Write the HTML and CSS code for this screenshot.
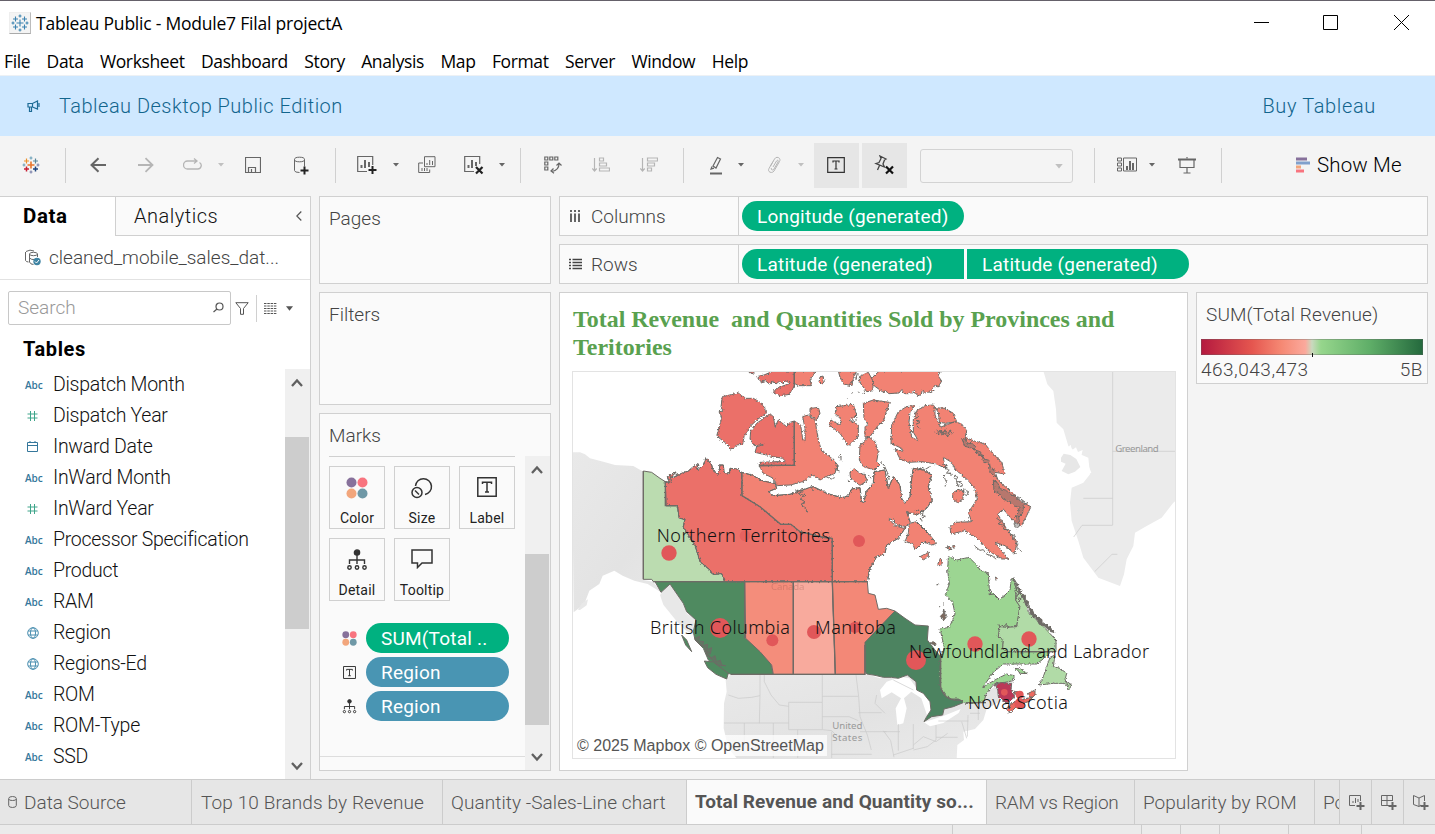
FILE: index.html
```html
<!DOCTYPE html>
<html lang="en">
<head>
<meta charset="utf-8">
<title>Tableau Public - Module7 Filal projectA</title>
<link rel="stylesheet" href="styles.css">
</head>
<body>
<svg class="defs" width="0" height="0">
  <symbol id="caret" viewBox="0 0 6 4"><path d="M0 0h6L3 3.5z"/></symbol>
  <symbol id="dots" viewBox="0 0 22 22"><circle cx="5.5" cy="5.5" r="5" fill="#87719b"/><circle cx="16.5" cy="5.5" r="5" fill="#f8747f"/><circle cx="5.5" cy="16.5" r="5" fill="#f2a67c"/><circle cx="16.5" cy="16.5" r="5" fill="#6f98a6"/></symbol>
  <symbol id="label" viewBox="0 0 20 20"><path d="M.8.8h18.4v18.4H.8zM5.5 7V5.2h9V7M10 5.2v10M8 15h4" fill="none" stroke="#333" stroke-width="1.5"/></symbol>
  <symbol id="detail" viewBox="0 0 20 22"><g fill="none" stroke="#333" stroke-width="1.4"><circle cx="10" cy="3.5" r="2.6" fill="#333"/><path d="M10 6v9M2.500 15v-4h15v4"/><circle cx="2.500" cy="18.500" r="1.700"/><circle cx="10" cy="18.500" r="1.700"/><circle cx="17.500" cy="18.500" r="1.700"/></g></symbol>
  <symbol id="globe" viewBox="0 0 12 12"><g fill="none" stroke="#4a8fb0"><circle cx="6" cy="6" r="5.300"/><ellipse cx="6" cy="6" rx="2.500" ry="5.300"/><path d="M1.200 4h9.600M1.200 8h9.600"/></g></symbol>
  <symbol id="up" viewBox="0 0 12 10"><path d="M1 8l5-5.500L11 8" fill="none" stroke="#606060" stroke-width="2.300"/></symbol>
  <symbol id="down" viewBox="0 0 12 10"><path d="M1 2l5 5.500L11 2" fill="none" stroke="#606060" stroke-width="2.300"/></symbol>
</svg>
<div class="app">
  <header class="title">
    <span class="appicon"><svg class="logo" width="18" height="18" viewBox="0 0 18 18"><path d="M9 5.500v7M5.500 9h7M4.500 2.500v5M2 5h5M13.500 2.500v5M11 5h5M4.500 10.500v5M2 13h5M13.500 10.500v5M11 13h5M9 .5v3M7.500 2h3M2 7.500v3M.5 9h3M9 14.500v3M7.500 16h3M16 7.500v3M14.500 9h3"/></svg></span>
    <span class="title-text">Tableau Public - Module7 Filal projectA</span>
    <svg class="winctl" width="155" height="20" viewBox="0 0 155 20" fill="none" stroke="#000"><path d="M0 9.500h15M69.500 2.500h14v14h-14zM140 2l15 15M155 2l-15 15"/></svg>
  </header>
  <nav class="menu"><span>File</span><span>Data</span><span>Worksheet</span><span>Dashboard</span><span>Story</span><span>Analysis</span><span>Map</span><span>Format</span><span>Server</span><span>Window</span><span>Help</span></nav>
  <div class="banner">
    <svg width="14" height="14" viewBox="0 0 14 14" fill="none" stroke="#1d6b96" stroke-width="1.200"><path d="M1 4.500h4.500L10.500 2v8L5.500 8H1zM5.500 4.500V8M2.500 8v4.500h2V8M12 4v4"/></svg>
    <span>Tableau Desktop Public Edition</span><span class="buy">Buy Tableau</span>
  </div>
  <div class="toolbar">
    <svg width="18" height="18" viewBox="0 0 18 18" stroke-width="1.200"><path d="M9 5.500v7M5.500 9h7" stroke="#e8762d" stroke-width="1.600"/><path d="M4.500 2.500v5M2 5h5" stroke="#eb912c"/><path d="M13.500 2.500v5M11 5h5" stroke="#59879b"/><path d="M4.500 10.500v5M2 13h5" stroke="#c72035" stroke-width="1.500"/><path d="M13.500 10.500v5M11 13h5" stroke="#1f447e" stroke-width="1.500"/><path d="M9 .5v3M7.500 2h3M2 7.500v3M.5 9h3" stroke="#6fa3bb"/><path d="M9 14.500v3M7.500 16h3M16 7.500v3M14.500 9h3" stroke="#7c82ab"/></svg><i class="sep"></i>
    <svg width="17" height="16" viewBox="0 0 17 16" stroke-width="2"><path d="M16 8H2M8.500 1.200L1.500 8l7 6.800"/></svg>
    <svg class="dim" width="17" height="16" viewBox="0 0 17 16" stroke-width="1.800"><path d="M0 8h14M7.500 1.200L14.500 8l-7 6.800"/></svg>
    <svg class="dim" width="19" height="14" viewBox="0 0 19 14"><path d="M13 3H4.500a3.800 3.800 0 000 8h10a3.500 3.500 0 002-6.500M11 .5L14 3l-3 2.500" stroke-width="1.300"/></svg>
    <svg class="caret dim" width="6" height="4"><use href="#caret"/></svg>
    <svg width="16" height="16" viewBox="0 0 16 16"><path d="M.5.5h15v15H.5zM3.500 15.500v-5h7v5M6.500 12v3" stroke-width="1.200"/></svg>
    <svg width="17" height="19" viewBox="0 0 17 19"><path d="M1.500 3.500v11q0 2 5 2M11.500 3.500v7M1.500 3.500a5 2.300 0 0110 0a5 2.300 0 01-10 0"/><path d="M11.500 10.500v8M7.500 14.500h8" stroke="#222" stroke-width="2"/></svg><i class="sep"></i>
    <svg width="20" height="20" viewBox="0 0 20 20"><path d="M10 16.500H.7V1.500h15V10" stroke-width="1.200"/><path d="M4.500 10v3M8 5v8M12 7v5" stroke-width="2"/><path d="M15.500 11v8M11.500 15h8" stroke="#222" stroke-width="2"/></svg>
    <svg class="caret" width="6" height="4"><use href="#caret"/></svg>
    <svg width="18" height="18" viewBox="0 0 18 18"><path d="M6.500.7h10.500v10H6.500zM5 7H.7v9.500h11v-3M9 7v2M11.700 4v5M14.500 5v4M4 12v3M6.500 12v3M9 12v3"/></svg>
    <svg width="20" height="20" viewBox="0 0 20 20"><path d="M10 16.500H.7V1.500h15V9" stroke-width="1.200"/><path d="M4.500 10v3M8 5v8M12 7v4" stroke-width="2"/><path d="M12 12l6.500 6.500M18.500 12L12 18.500" stroke="#222" stroke-width="2.200"/></svg>
    <svg class="caret" width="6" height="4"><use href="#caret"/></svg><i class="sep"></i>
    <svg width="18" height="18" viewBox="0 0 18 18"><path d="M.8 1h3v3h-3zM5.800 1h3v3h-3zM10.800 1h3v3h-3zM.8 6h3v3h-3zM.8 11h3v3h-3zM15 8q0 6-7 7.500M12.500 9.500L15 7l2.500 2.500M9.500 12.500L7 15l3 2.200" stroke-width="1.200"/></svg>
    <svg class="dim" width="18" height="16" viewBox="0 0 18 16"><path d="M2.500 1v13M.3 11.500L2.500 14l2.200-2.500M7.500 1h4v3h-4zM7.500 6h7v3h-7zM7.500 11h10v3h-10z" stroke-width="1.200"/></svg>
    <svg class="dim" width="18" height="16" viewBox="0 0 18 16"><path d="M2.500 1v13M.3 11.500L2.500 14l2.200-2.500M7.500 1h10v3h-10zM7.500 6h7v3h-7zM7.500 11h4v3h-4z" stroke-width="1.200"/></svg><i class="sep"></i>
    <svg width="14" height="20" viewBox="0 0 14 20"><path d="M8.500 2.500l3 1.500-4.500 9-3-2zM3 11.500L2 14l3-.8" stroke-width="1.200"/><path d="M1 18.500h12" stroke-width="2"/></svg>
    <svg class="caret" width="6" height="4"><use href="#caret"/></svg>
    <svg class="dim" width="14" height="18" viewBox="0 0 14 18"><path d="M3.500 10L7.500 3c2-3.500 7-1 5 2.500L7 15c-2 3-7 1-5-2.500l4-7M6 11l3.500-6c1-1.500 2.500-.5 1.500 1L7 13c-1.500 2-3.500.5-2.500-1"/></svg>
    <svg class="caret dim" width="6" height="4"><use href="#caret"/></svg>
    <span class="toggle"><svg width="18" height="16" viewBox="0 0 18 16"><path d="M.7.7h16.600v14.600H.7zM6 5.500V4h6v1.500M9 4v8M7.500 12h3" stroke="#333" stroke-width="1.200"/></svg></span>
    <span class="toggle"><svg width="20" height="20" viewBox="0 0 20 20"><path d="M6 1l6 3-1.500 1-1.500 4 1.500 3L2 8.500l3-1 2-4zM5.500 10.500L3.500 15" stroke="#444" stroke-width="1.300"/><path d="M12 11.500l7 7M19 11.500l-7 7" stroke="#111" stroke-width="2.200"/></svg></span>
    <span class="select"><svg class="caret dim" width="8" height="5" viewBox="0 0 6 4"><path d="M0 0h6L3 3.500z"/></svg></span><i class="sep"></i>
    <svg width="20" height="16" viewBox="0 0 20 16"><path d="M.5 1h4v3h-4zM.5 6h4v3h-4zM.5 11h4v3h-4zM6.500 1h13v13h-13z"/><path d="M10 9v4M13 4v9M16 6v7" stroke-width="2"/></svg>
    <svg class="caret" width="6" height="4"><use href="#caret"/></svg>
    <svg width="18" height="17" viewBox="0 0 18 17"><path d="M0 2.500h18" stroke-width="2"/><path d="M2 2v8.500h14V2M9 0v1.500M9 10.500V16M5.500 16h7" stroke-width="1.200"/></svg><i class="sep"></i>
    <span class="showme"><svg width="15" height="16" viewBox="0 0 15 16"><path d="M0 2h11" stroke="#87719b" stroke-width="3"/><path d="M0 6h14" stroke="#80a0cc" stroke-width="3"/><path d="M0 10h5" stroke="#f2a67c" stroke-width="3"/><path d="M0 14h8" stroke="#f8747f" stroke-width="3"/></svg>Show Me</span>
  </div>
  <main class="work">
    <aside class="data">
      <div class="ptabs"><b>Data</b><div class="analytics"><span>Analytics</span><svg width="6" height="10" viewBox="0 0 6 10"><path d="M5.300.5L.8 5l4.500 4.500" fill="none" stroke="#555" stroke-width="1.200"/></svg></div></div>
      <div class="source"><svg width="18" height="18" viewBox="0 0 18 18" fill="none" stroke="#666"><path d="M2 2.500q4-2.500 8-.5M1.500 3v8.500q1 1.500 3 1.500M5.500 5a4 1.700 0 018 0a4 1.700 0 01-8 0v8q1 2.500 4 2.500M13.500 5v3M5.500 9q2 2 5 1.500"/><circle cx="13" cy="12.500" r="3.700" fill="#3f84a3" stroke="none"/><path d="M11 12.500l1.500 1.500 2.500-3" stroke="#fff"/></svg><span>cleaned_mobile_sales_dat...</span></div>
      <div class="searchrow"><div class="search"><span>Search</span><svg width="11" height="11" viewBox="0 0 11 11" fill="none" stroke="#555" stroke-width="1.200"><circle cx="6.500" cy="4.500" r="3.500"/><path d="M4 7L.5 10"/></svg></div>
        <svg class="funnel" width="14" height="13" viewBox="0 0 14 13" fill="none" stroke="#555"><path d="M.8.7h12.400L8.500 6.500v5.800h-3V6.500z"/></svg><i></i>
        <svg class="grid" width="13" height="11" viewBox="0 0 13 11" stroke="#555" stroke-dasharray="2.500 .8"><path d="M0 .5h12.500M0 3h12.500M0 5.500h12.500M0 8h12.500M0 10.500h12.500"/></svg>
        <svg width="7" height="5" viewBox="0 0 6 4"><path d="M0 0h6L3 4z" fill="#555"/></svg></div>
      <h2>Tables</h2>
      <div class="listwrap">
        <ul class="fields">
          <li><em>Abc</em>Dispatch Month</li><li><em><svg width="11" height="10" viewBox="0 0 11 10" stroke="#3fa58a"><path d="M3.500 0v10M7.500 0v10M.5 3h10M.5 7h10"/></svg></em>Dispatch Year</li>
          <li><em><svg width="11" height="11" viewBox="0 0 11 11" fill="none" stroke="#35779b"><path d="M.5 1.500h10v9H.5zM.5 4.500h10M3 0v2M8 0v2"/></svg></em>Inward Date</li><li><em>Abc</em>InWard Month</li>
          <li><em><svg width="11" height="10" viewBox="0 0 11 10" stroke="#3fa58a"><path d="M3.500 0v10M7.500 0v10M.5 3h10M.5 7h10"/></svg></em>InWard Year</li><li><em>Abc</em>Processor Specification</li><li><em>Abc</em>Product</li><li><em>Abc</em>RAM</li>
          <li><em><svg width="12" height="12"><use href="#globe"/></svg></em>Region</li><li><em><svg width="12" height="12"><use href="#globe"/></svg></em>Regions-Ed</li><li><em>Abc</em>ROM</li><li><em>Abc</em>ROM-Type</li><li><em>Abc</em>SSD</li>
        </ul>
        <div class="scroll s1"><svg width="12" height="10"><use href="#up"/></svg><i></i><svg width="12" height="10"><use href="#down"/></svg></div>
      </div>
    </aside>
    <section class="cards">
      <div class="card pages">Pages</div>
      <div class="card filters">Filters</div>
      <div class="card marks"><div class="mhead">Marks</div>
        <div class="mbody"><div class="mleft">
          <div class="btns">
            <div><svg width="22" height="22"><use href="#dots"/></svg>Color</div>
            <div><svg width="22" height="22" viewBox="0 0 22 22" fill="none" stroke="#333" stroke-width="1.500"><path d="M4.500 9A8 8 0 1114 17.500"/><circle cx="6" cy="15.500" r="5"/><path d="M4 13.500l4 4"/></svg>Size</div>
            <div><svg width="20" height="20"><use href="#label"/></svg>Label</div>
            <div><svg width="20" height="22"><use href="#detail"/></svg>Detail</div>
            <div><svg width="22" height="20" viewBox="0 0 22 20" fill="none" stroke="#333" stroke-width="1.500"><path d="M1 1h20v13H11l-4.500 4.500V14H1z"/></svg>Tooltip</div>
          </div>
          <div class="mrow"><svg width="15" height="15"><use href="#dots"/></svg><span class="pill">SUM(Total ..</span></div>
          <div class="mrow"><svg width="13" height="13"><use href="#label"/></svg><span class="pill blue">Region</span></div>
          <div class="mrow"><svg width="14" height="15"><use href="#detail"/></svg><span class="pill blue">Region</span></div>
          <div class="mfoot"></div>
        </div>
        <div class="scroll s2"><svg width="12" height="10"><use href="#up"/></svg><i></i><svg width="12" height="10"><use href="#down"/></svg></div></div>
      </div>
    </section>
    <section class="sheet">
      <div class="shelf"><div class="sname"><svg width="13" height="12" viewBox="0 0 13 12" stroke="#555" stroke-width="1.800"><path d="M2 0v2M6 0v2M10 0v2M2 3.500V12M6 3.500V12M10 3.500V12"/></svg>Columns</div><span class="pill wide">Longitude (generated)</span></div>
      <div class="shelf"><div class="sname"><svg width="13" height="12" viewBox="0 0 13 12" stroke="#444" stroke-width="1.300"><path d="M0 1.500h2M0 4.500h2M0 7.500h2M0 10.500h2M3.500 1.500H13M3.500 4.500H13M3.500 7.500H13M3.500 10.500H13"/></svg>Rows</div><span class="pill wide first">Latitude (generated)</span><span class="pill wide last">Latitude (generated)</span></div>
      <div class="lower">
        <div class="view">
          <h1>Total Revenue&nbsp; and Quantities Sold by Provinces and<br>Teritories</h1>
          <div class="map">
            <svg width="604" height="388" viewBox="36 18 1812 1164">
              <defs><filter id="coast" x="0" y="0" width="100%" height="100%" filterUnits="userSpaceOnUse"><feTurbulence type="fractalNoise" baseFrequency=".16" numOctaves="2" seed="4"/><feDisplacementMap in="SourceGraphic" scale="10" xChannelSelector="R" yChannelSelector="G"/></filter>
              <linearGradient id="land" x1="0" y1="0" x2="1" y2="1"><stop offset="0" stop-color="#e9e9e9"/><stop offset=".5" stop-color="#e3e3e3"/><stop offset="1" stop-color="#ebebeb"/></linearGradient></defs>
              <g class="base">
                <path fill="url(#land)" d="M36 262l24 0 15 6 15 12 40 10 35 10 55 3 30 17V645l30 5 23 32 25-25 45 60 10 30 32 20 0 40-12 5-35-35-35-45-30-50-40-25-40-10-35-15-25-15-35 15-10 25-30 20-15 40-32 25z"/>
                <path fill="#e8e8e8" d="M54 735l12-20 18-12-4 18-20 14zM300 690l26-28 42 70 12 25 26 22 0 30-26-10-30-30-40-50z"/>
                <path fill="url(#land)" d="M510 930H930L960 940 1060 930 1130 1010H1220L1265 988 1305 965 1322 990 1318 1010 1280 1032 1270 1065 1245 1092 1210 1100 1212 1125 1192 1140 1190 1182H532L505 1150 491 1090 492 1015 500 980 497 945z"/>
                <path fill="#ebebeb" d="M1450 18l12 40 18 20 8 55 2 40 20 20 15 50 25 20 35 15 5 50-20 25-35 15-5 45 5 55 20 60 15 50 45 60 65 25 12-35 8-45 20-40 5-40 35-20 45-25 35-45 25-20V18z"/>
                <path fill="#fff" d="M1512 235l10 14 10-10 4 16 12-8 6 14 14-6-4 18 14 10 16 40-16 10-6-24-40-40-20 2-10 16z"/>
                <path fill="#e7e7e7" d="M1503 278l8-12 20 4 18 12 12 24-16 14-20 8-20-10 12-22-14-6z"/>
                <path fill="#fff" d="M960 975l20-25 42-15 26 5 22 30 20 15 20 15 6 40-12 20-20-60-30-20-22 20 8 30-10 45-18 5-5-50 16-30-28-18-30 18zM1092 1072l60-20 50-20-6 12-46 30-40 10z"/>
                <g fill="none" stroke="#c9c9c9" stroke-width="2"><path d="M600 930v60l-2 85M505 990l30 10 40-3 25-5M613 930v20l10 20 10 20 25 30 28 4M686 1012h100M686 1012v82h100M787 930v164M787 994h108M787 1055h80l28 12M787 1094l28 3 20 20M492 1074h194M553 1074v60M640 1074v110M713 1094v88M815 1100v80M815 1168h120M888 930l8 65 4 60 22 55 12 45M895 1043h70M900 1100h80M950 990l-5 25 30 30M970 1097l22 30 10 50M1000 1170l60-20M1015 1077v80M1060 1077v75M1128 1080v45l-26 20-42 10M1128 1117h65M970 1100h50M1135 1068h90M1230 1045h30M1255 1030v35M1224 1050l-2 65M1205 1070l15 50M1000 945l60 30M1060 1140l30-25 38 15 35-25"/><path d="M1658 18v462M1658 259h190M1658 400h-88M1658 481h-92l-25 35M1672 568h-16l-52 52"/></g>
                <g class="maptext"><text x="1666" y="261" textLength="130">Greenland</text><text x="817" y="1092" textLength="90">United</text><text x="817" y="1128" textLength="90">States</text></g>
              </g>
              <g class="prov">
                <path fill="#bbdcb0" d="M250 318l25 4 25 18 16 10 2 72h34l6 38 17 2-5 23 15 25 20 30 15 50 30 25 8 13 27-2 12 24H280l-5-7h-25z"/>
                <path fill="#4f8a60" d="M285 650H554L557 820 600 855 632 895 640 928H513L480 915 445 885 430 850 405 825 400 800 408 765 380 740 370 715 330 657 303 682z"/>
                <path fill="#4f8a60" d="M365 810l15 15 15 35-18-20zM433 888l27 3 45 34-5 17-32-14-25-20z"/>
                <path fill="#6e6b66" fill-opacity=".6" d="M405 820l14-6-4 14 16 2-4 12 16-4-2 16 14-6-4 18-12-8 14 22 12-8 4 18 12-4 4 14 12 2-12 0-8 0-20-16-16-16-8-24-18-12z"/>
                <path fill="#f48d7b" d="M554 650H700V928H640L635 900 600 860 557 820z"/>
                <path fill="#f8aa9d" d="M700 650H817L826 928H700z"/>
                <path fill="#f38877" d="M817 650H922L925 685 945 690 955 733 980 730 1005 738 915 840V928H826z"/>
                <path fill="#4c8360" d="M1005 738l30 22 30 20 40 3-3 42 23 30 17 20v85l18 22 35 16h23l-6 14-32 13-28 7-4 18-33 5-23 15 8-15 13-20-3-25-20-25-20-10-2-25-26-20-27 10-20-3-25 0-25-6-25-4-5-10v-85z"/>
              </g>
              <g class="prov" filter="url(#coast)">
                <path fill="#9cd592" d="M1165 575l25 10 37-8 23 23 10 15 25 10 3 50 12 10 18 18 17-13 15-15 3-30 5-8 12 38-3 30 13 20-10 60-30 2-20-2-5 30 15 10-2 25 12 10h130l-5 10-35 27H1330l-30 25-32 45 8-5 34-20 30-15 23 5-3 15-25 5-27 2-10 8-20 25-5 20-25 8h-32l-18-13h-25l-20-15-13-20v-90l13-30-13-55 28-5 17-40-7-35-22-23 12-32-5-40z"/>
                <path fill="#b1dba7" d="M1358 637l22 48 20 30 5 25 25 25 30 30 28 30v35H1340l-12-10 2-25-15-10 5-30 20 2 30-2 10-60-13-20 3-30zM1485 870l-5 35 20 5 20 15-5 20 20 15-10 17-10-22-35 0-42 5 12-25 20-58z"/>
                <path fill="#9cd592" d="M1362 910l20 2 20 14-20-1z"/>
                <path fill="#6e6b66" d="M1360 640l14 20-4 8 14 4-4 12 16 6 0 14 10 6-2 14 14 12 4 12 24 16 0 10 22 10 14 18-10-2-20-18-14-4-10-20-14-6-6-22-10-8-8-24-10-14-10-30z"/>
                <path fill="none" d="M1363 675l14 8-10 14 16 4-8 10M1315 780l18 6 4-8 10 8M1510 960l8-14 6 18 10-8M1285 675l10 4-8 10 18-2"/>
                <path fill="#bb3758" d="M1305 957l20-4 30 2-2 20 12 20-25 20-25-20-2-20z"/>
                <path fill="#ee6a60" d="M1340 1037l15-22 25-10 40-10-15 15-30 10-25 23zM1405 985l20-10 0 15-12 10zM1362 980l18 0 10 12-20 0z"/>
              </g>
              <g class="prov arctic" filter="url(#coast)">
                <path fill="#eb6f69" stroke="none" d="M316 350l12 2-6-17 23-13-10 18 30-15 20-7 15-13 15-8-3 18 18-15 8-22 17 22 5 18 15 10 5-28h10l2 22 16 3 2-15 20 2 15 10 1 70 54 33 62 53h31l27 22 70 17 27 3v130H497l-12-24-27 2-8-13-30-25-15-50-20-30-15-25 5-23-17-2-6-38h-34z"/>
                <path fill="none" d="M497 650l-12-24-27 2-8-13-30-25-15-50-20-30-15-25 5-23-17-2-6-38h-34l-2-72 12 2-6-17 23-13-10 18 30-15 20-7 15-13 15-8-3 18 18-15 8-22 17 22 5 18 15 10 5-28h10l2 22 16 3 2-15 20 2 15 10M318 350l10 6-4-16 10 10-4-20M345 325l8 8-2-12M408 312l8-12-10 2"/>
                <path fill="#f28273" stroke="none" d="M545 322l30 8 35 18 35 7 5 15-25 10 15 12 50-4 35-13 35-10 40 20 45 13 20-5 10-21 25-4 5 42 7 2 6-32 22-25 2-35 33-5 10 55 15-35 20 25 5 40 10 15 15-20 5-55 5-30 30 5 25 15-10 35 12 40-17 25-30 20-30-10 10 30-15 20-20 30-35 20-5 25-25 10-20 35-8 40H817V520l-27-3-70-17-27-22h-31l-62-53-54-33z"/>
                <path fill="none" d="M545 322l30 8 35 18 35 7 5 15-25 10 15 12 50-4 35-13 35-10 40 20 45 13 20-5 10-21 25-4 5 42 7 2 6-32 22-25 2-35 33-5 10 55 15-35 20 25 5 40 10 15 15-20 5-55 5-30 30 5 25 15-10 35 12 40-17 25-30 20-30-10 10 30-15 20-20 30-35 20-5 25-25 10-20 35-8 40M705 375l25 3-15 8 20 6-14 10 14 8-12 8 14 10 4 16"/>
                <path fill="#fff" d="M985 460l16 6 10 14 24 4-4 6-26-8z"/>
                <path fill="#eb6f69" d="M487 95l48-11 20 16h25l25 15 17 27-32 23-20 20-18 30-4 23-18 2-18 16-7-16-35-27 15-53-8-20 12-2-6-12zM703 168V301H597l3-9 50-2h28l-10-10-28-5-55-13 5-17 25-7-32 4-13-20 2-22 18-25 40-29 10 9 5 30 10-20 25 20 10-13zM590 35l22-5 28-12h63v44l-13 26-30 4-20-10 10-12 40-15-14-8-8 8-10-6-10 8-8-8-12 8-12-10-12 4zM565 18h20l-6 8-10-2z"/>
                <path fill="#f28273" d="M703 168l19 12 6 42 7 6V190l-7-35 17-5 20 15 10 60 10 33 25 17 22 23-7 27-25 10-20 10-23-15-27 20-40 10-40 2-10-22-30-15-12-22 105-2zM703 18h65l-18 27 5 17h-40l-12-7zM780 36l8-3 5 16-8 10-8-8zM750 130l25-3 5 18-10 20-20-15zM830 125l50-7 10 32-20 15 25 15v35l-30 28-25-38-32-25 4-15 28 15 5-15-20-20zM870 325l10-16 20 16 14 4 8 18-22 14-28-20z"/>
                <path fill="#f28273" d="M910 115l30-10 48 7-18 58-15 10-25 35-15 5V185l10-5-13-20zM925 215l20 15 10 30-5 30 10 10-15 15-35-10-12-20 2-45 15-10zM898 35l27-13 15 28-2 28-18 2-22-30zM835 18h55l-10 22-5 22-25-5-10-20zM958 18h184l-8 14 11 16-10 18-12-4-6 16-20 6-10-8-4 14-10 2-10-14-16 8-14 0-8-12-8 10-30 2-10-8-10 2-25-18-8-22z"/>
                <path fill="#f28273" d="M1065 122l-25 3-25 15-20 40-2 55 32 15 5 10-25-8 15 30 25 10 40-2 45 7 25 13-5-33 25 15 10 20 40 35 20 25 7 30-27 40 10 28-50 2-15 15 3 20 42-10 40 25 30 35 40 25h20l-40-50 30 10 30 25 5-35-30-40-15-25-12-20 17-15 25 30 28 23 17-33 13-27-28-13-30-30-40-35-10-25 30 5-10-35-30-30-20-25-35-10-25-10 5-20-15-20-20-7-45 17-5-45-15-22-25 2-25 15-10 25v40l15 25-20-10-8-45 3-30zM1125 128l30 2 25 15 10 25-30 5-25-3-10-22zM1178 385l16-12 18 6-4 24-16 10-14-12zM1048 475l22-5 35 35 25 30-15 5-25-10-25 25-7-20-23-5 10-25zM1080 575l25-13v13l-15 10zM1132 600l10-22 5 17-10 8zM1160 545l10 0 4 8-10 2zM1178 542l8 0-6 8zM1306 636l6 4-4 6z"/>
                <path fill="#6e6b66" fill-opacity=".45" d="M1205 220l16 4-4 10 18 2 12 8-6 10 20 6 12 22 14 4 4 22 14 8 4 20-10-6-12-14-2-20-14-4-4-20-16-6-4-12-16-6-16-4zM1300 345l14 10 6 16 16 4 20 16 20 6 24 18-8 6-6 26-10 10 4 24-10 10-8-14 10-30 6-20-16-4-14-14-18-6-14-18-14-6z"/>
                <path fill="none" d="M1125 200l10 10 4-14 8 16 8-18 8 22 6-20 8 10M1130 195l8 8 8-4 4 10 14-6M1063 140l14 14-12 8 16 10-14 6 10 12M1150 330l6 14 4 8-6 14M1170 322l4 8-4 6M1185 330l8 6-4 8-6-6zM1150 298l12 4-8 8 14 4-8 10 12 2M1190 350l14 0 2 14-12 0zM1212 370l14 10-6 12-10-6zM1075 315l14-8 4 8 16-10M1310 460l14 10-10 6 20 6-4 10 18 4 0 10 16 6-8 8 20 12-6 14 12 14M1240 540l20 16 10-2 10 14 16 4 14 12M1060 445l14-12 6 12 12-8-6 14 10 4-16 6 8 8M838 278l5-8 0 16M885 150l6 6-4 10M880 165l-8 8M875 86l3-4M860 98l3 2M895 80l3 4M908 86l4-6M868 60l8-14M880 26l8 18 4-22M755 370l8 8M870 350l-12-6M800 336l14 6 10-4M835 300l-8 14 12 4M925 330l8 10M960 290l12 10 10 22 6 22"/>
                <path fill="#7d6b60" d="M1141 754l8-8 2-14 4 16 6 6-10 12zM1130 660l4-4 2 2zM1138 728l1-4zM1150 718l1-5zM1165 705l3-4M1113 835l6-6 10 8-8 2z"/>
              </g>
              <g class="lines"><path d="M250 318V643M280 650H922M554 650V820M700 650V928M817 520V650l9 278M513 928H915V840M546 322v70l54 33 62 53h31l27 22 70 17 27 3M703 18v50M703 168V301H597M316 350v72h34M1142 865v100M1142 965q10 45 60 40M1218 1013h60M1370 860h118"/></g>
              <text class="maptext faint" x="633" y="674" textLength="100">Canada</text>
              <g fill="#e15759"><circle cx="327" cy="564" r="23"/><circle cx="555" cy="512" r="16" opacity=".55"/><circle cx="897" cy="528" r="18"/><circle cx="480" cy="789" r="30"/><circle cx="637" cy="826" r="18"/><circle cx="762" cy="801" r="21"/><circle cx="885" cy="787" r="17"/><circle cx="1068" cy="885" r="30"/><circle cx="1245" cy="837" r="23"/><circle cx="1407" cy="822" r="23"/><circle cx="1333" cy="982" r="10"/><circle cx="1379" cy="989" r="12"/><circle cx="1379" cy="1016" r="16"/></g>
              <g class="names"><text x="290" y="530" textLength="520">Northern Territories</text><text x="270" y="806" textLength="420">British Columbia</text><text x="765" y="806" textLength="243">Manitoba</text><text x="1047" y="879" textLength="720">Newfoundland and Labrador</text><text x="1224" y="1032" textLength="300">Nova Scotia</text></g>
            </svg>
            <div class="attr">© 2025 Mapbox © OpenStreetMap</div>
          </div>
        </div>
        <div class="legend"><div>SUM(Total Revenue)</div><div class="ramp"></div><div class="range"><span>463,043,473</span><span>5B</span></div></div>
      </div>
    </section>
  </main>
  <footer class="tabs">
    <div class="t1"><svg width="9" height="12" viewBox="0 0 9 12" fill="none" stroke="#666"><path d="M.7 2.500a3.800 2 0 017.600 0v7a3.800 2 0 01-7.600 0zM.7 3a3.800 1.500 0 007.600 0"/></svg>Data Source</div><div class="t2">Top 10 Brands by Revenue</div><div class="t3">Quantity -Sales-Line chart</div><div class="t4">Total Revenue and Quantity so...</div><div class="t5">RAM vs Region</div><div class="t6">Popularity by ROM</div><div class="t7">Po</div>
    <div class="ti"><svg width="17" height="17" viewBox="0 0 17 17"><path d="M6 11.500H.5V1.500h11V7M4 7v2M6.500 4v5M9 5v3"/><path d="M11.500 8v8M7.500 12h8" stroke-width="2"/></svg></div>
    <div class="ti"><svg width="17" height="17" viewBox="0 0 17 17"><path d="M8 11.500H.5V1.500h11V7M.5 6.500h11M6 1.500v10"/><path d="M11.500 8v8M7.500 12h8" stroke-width="2"/></svg></div>
    <div class="ti"><svg width="17" height="17" viewBox="0 0 17 17"><path d="M8 11L6 12.500.5 10.500V1.500L6 4l5.500-2.500V7M6 4v8.500"/><path d="M11.500 8v8M7.500 12h8" stroke-width="2"/></svg></div>
  </footer>
  <div class="status"><i></i><i></i><i></i><i></i><i></i><i></i></div>
</div>
</body>
</html>
```
FILE: styles.css
```css
*{box-sizing:border-box}
body{margin:0;width:1435px;height:834px;overflow:hidden;background:#f4f4f4;font:300 20px Roboto,"Liberation Sans",sans-serif;color:#222}
svg{display:block;flex:none}
.defs{position:absolute}
.app{display:flex;flex-direction:column;height:834px}
.title{height:46px;border-top:1px solid #65616a;background:#fff;display:flex;align-items:center;padding:0 26px 2px 9px;flex:none}
.appicon{width:22px;height:22px;background:#f4f4f4;border:1px solid #eee;border-right-color:#bbb;border-bottom-color:#aaa;display:grid;place-items:center}
.logo{stroke:#3b82b0;fill:none;stroke-width:1.100}
.title-text{font:400 17.5px "Open Sans",sans-serif;letter-spacing:-.22px;color:#000;margin-left:5px}
.winctl{margin-left:auto}
.menu{height:30px;background:#fff;border-bottom:1px solid #edf1f5;display:flex;align-items:center;gap:16.4px;padding-left:4px;font:400 17.5px "Open Sans",sans-serif;letter-spacing:-.37px;color:#000;flex:none}
.banner{height:60px;background:#cfe8ff;color:#12658d;display:flex;align-items:center;padding:0 59px 0 27px;letter-spacing:.48px;flex:none}
.banner span{margin-left:18px}
.banner .buy{margin-left:auto;letter-spacing:.65px}
.toolbar{height:60px;flex:none;display:grid;align-items:center;padding:0 0 2px 22px;grid-template-columns:43px 25px 48px 45px 35px 27px 48px 42px 22px 36px 25px 46px 35px 21px 24px 48px 48px 43px 26px 29px 29px 31px 16px 48px 58px 174px 23px 32px 29px 43px 75px 139px}
.toolbar svg{fill:none;stroke:#666}
.toolbar svg.dim{stroke:#b5b5b5}
.toolbar svg.caret{fill:#666;stroke:none}
.toolbar svg.caret.dim{fill:#c0c0c0}
.sep{width:1px;height:35px;background:#d0d0d0;margin-top:1px}
.toggle{width:45px;height:45px;background:#e6e6e6;display:grid;place-items:center;padding-right:2px}
.select{width:153px;height:34px;border:1px solid #d3d3d3;border-radius:3px;display:flex;align-items:center;justify-content:flex-end;padding-right:9px;margin-top:2px}
.showme{display:flex;align-items:center;gap:6px;color:#000;letter-spacing:.15px;font-size:20.5px}
.work{display:flex;gap:8px;height:583px;flex:none}
.data{width:311px;background:#fff;border:1px solid #d0d0d0;border-left:0;border-bottom:0;display:flex;flex-direction:column;color:#111}
.ptabs{display:flex;height:39px;flex:none}
.ptabs b{width:115px;padding:7px 0 0 23px;font-weight:700;font-size:20.5px;letter-spacing:.6px;color:#000;line-height:24px}
.analytics{flex:1;background:#fafafa;border-left:1px solid #d0d0d0;border-bottom:1px solid #d0d0d0;padding:0 8px 0 18px;display:flex;align-items:center;justify-content:space-between;font-size:20px;letter-spacing:.5px}
.source{height:44px;border-bottom:1px solid #e2e2e2;display:flex;align-items:center;gap:7px;padding-left:24px;color:#444;font-size:19px;flex:none}
.searchrow{display:flex;align-items:center;height:34px;margin:11px 0 0 8px;flex:none}
.search{width:223px;height:34px;border:1px solid #c8c8c8;border-radius:2px;display:flex;align-items:center;justify-content:space-between;padding:0 6px 2px 9px;color:#999;font-size:19px}
.funnel{margin-left:4px}
.searchrow i{width:1px;height:27px;background:#d0d0d0;margin:0 7px}
.grid{margin-right:9px}
h2{font:700 20px/24px Roboto,sans-serif;letter-spacing:.6px;margin:12px 0 8px 23px;color:#000}
.listwrap{display:flex;flex:1;min-height:0}
.fields{list-style:none;margin:0;padding:0;flex:1;font-size:19.5px;letter-spacing:-.28px}
.fields li{height:31px;display:flex;align-items:center}
.fields em{width:28px;margin-left:25px;font:600 10px "Open Sans",sans-serif;letter-spacing:-.1px;color:#35779b;flex:none}
.fields em svg{margin-left:2px}
.scroll{background:#f0f0f0;display:flex;flex-direction:column;align-items:center}
.scroll svg{margin-right:1px}
.scroll i{background:#cdcdcd;width:100%}
.s1{width:25px;padding:9px 0 8px}
.s1 i{height:192px;margin-top:49px;margin-bottom:auto;width:24px;align-self:flex-start}
.cards{width:232px;display:flex;flex-direction:column;gap:8px}
.card{background:#fafafa;border:1px solid #d0d0d0;padding:10px 9px;color:#444;font-size:19px;line-height:24px}
.pages{height:88px}.filters{height:113px}
.card.marks{height:358px;padding:0;display:flex;flex-direction:column}
.mhead{height:42px;padding:10px 0 0 9px}
.mbody{display:flex;flex:1}
.mleft{width:205px;display:flex;flex-direction:column}
.btns{width:186px;margin-left:9px;padding-top:9px;border-top:1px solid #d0d0d0;display:grid;grid-template-columns:repeat(3,56px);gap:9px;height:145px;margin-bottom:20px;flex:none}
.btns div{border:1px solid #d0d0d0;height:63px;display:flex;flex-direction:column;align-items:center;justify-content:space-between;font:400 14px/16px Roboto;letter-spacing:.2px;color:#222;padding:10px 0 2px}
.mrow{display:flex;align-items:center;height:34px;flex:none}
.mrow svg{width:15px;margin:0 9px 0 22px}
.pill{background:#00b180;color:#fff;height:30px;width:143px;border-radius:15px;padding-left:15px;line-height:31px;font-weight:400;font-size:19px;letter-spacing:.22px;white-space:nowrap}
.blue{background:#4995b3}
.mfoot{flex:none;height:1px;background:#ddd;margin-top:33px}
.s2{width:25px;padding:9px 0 8px}
.s2 i{height:171px;margin-top:79px;margin-bottom:auto;width:24px;align-self:flex-start}
.sheet{width:869px;display:flex;flex-direction:column;gap:8px}
.shelf{height:40px;border:1px solid #d0d0d0;background:#fafafa;display:flex;align-items:center}
.sname{width:179px;height:38px;border-right:1px solid #d0d0d0;display:flex;align-items:center;gap:9px;padding-left:9px;color:#444;font-size:19px}
.wide{width:222px;margin-left:3px}
.first{border-radius:15px 0 0 15px}.last{border-radius:0 15px 15px 0}
.lower{display:flex;gap:8px;align-items:flex-start}
.view{width:629px;height:479px;border:1px solid #d0d0d0;background:#fff;padding:12px 11px 0 12px}
h1{margin:0 0 10px 1px;font:700 23.950px/28px "Liberation Serif",serif;color:#59a14f;white-space:nowrap}
.map{width:604px;height:388px;position:relative;outline:1px solid #e3e3e3;outline-offset:-1px}
.attr{position:absolute;left:3px;bottom:3px;height:21px;background:rgba(255,255,255,.75);padding:0 3px 0 2px;font:400 16px/21px "Liberation Sans",sans-serif;color:#555;white-space:nowrap}
.prov path{stroke:#6e6b66;stroke-width:3;stroke-linejoin:round}
.lines{fill:none;stroke:#6e6b66;stroke-width:4}
.maptext{font:400 29px "Noto Sans",sans-serif;fill:#999}
.faint{fill:#9b5a50;opacity:.35}
.names{font:300 54px "Noto Sans",sans-serif;fill:#111}
.legend{width:232px;height:92px;border:1px solid #d0d0d0;background:#fafafa;padding:10px 4px 0;color:#444;font-size:19px;line-height:24px}
.legend>div:first-child{padding-left:5px;letter-spacing:.13px}
.ramp{height:16px;margin-top:12px;background:linear-gradient(90deg,#b4193f,#e5564f 23%,#f58873 36%,#fba99c 47%,#c9d9be 50%,#96d68c 54%,#5fae68 76%,#24693d) border-box;border:1px solid rgba(100,100,100,.35);position:relative}
.ramp::after{content:"";position:absolute;left:110px;bottom:-3px;width:1px;height:4px;background:#111}
.range{display:flex;justify-content:space-between;margin-top:3px;letter-spacing:.5px}
.tabs{height:46px;flex:none;display:flex;background:#e6e6e6;border-top:1px solid #ccc;border-bottom:1px solid #ccc;color:#555;font-size:19px}
.tabs>div{border-right:1px solid #ccc;padding-left:8px;display:flex;align-items:center;gap:7px;white-space:nowrap;overflow:hidden;flex:none}
.tabs svg{stroke:#666;fill:none}
.t1{width:192px}.t2{width:251px;letter-spacing:.1px}.tabs>.t2{padding-left:9px}.t3{width:244px;letter-spacing:.07px}.t4{width:300px;background:#fafafa;font-weight:700;letter-spacing:.1px}.t5{width:148px;letter-spacing:-.2px}.t6{width:180px}.t7{width:25px}.ti{width:32px}
.tabs>.t4{padding-bottom:2px}
.tabs>.ti{padding-left:9px}
.status{height:9px;background:#ebebeb;display:flex;padding-left:952px}
.status i{border-left:1px solid #ccc;width:39px}
.status i:nth-child(1){width:189px}.status i:nth-child(4){width:69px}.status i:nth-child(5){width:73px}
```
